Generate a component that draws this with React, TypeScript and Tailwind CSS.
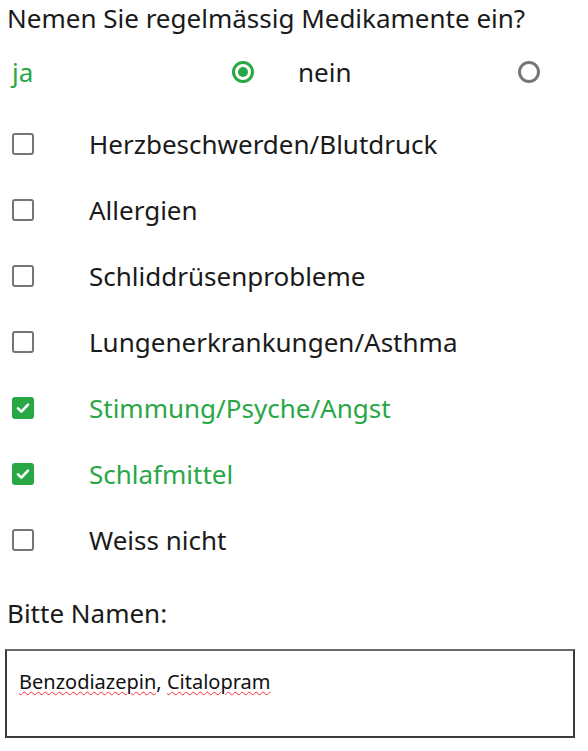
import { useState } from "react"

const options = [
  "Herzbeschwerden/Blutdruck",
  "Allergien",
  "Schliddrüsenprobleme",
  "Lungenerkrankungen/Asthma",
  "Stimmung/Psyche/Angst",
  "Schlafmittel",
  "Weiss nicht",
]

function Radio({ checked }: { checked: boolean }) {
  return (
    <span
      className={`flex items-center justify-center w-[22px] h-[22px] rounded-full border-[3px] ${
        checked ? "border-[#28a745]" : "border-[#767676]"
      }`}
    >
      {checked && <span className="w-[10px] h-[10px] rounded-full bg-[#28a745]" />}
    </span>
  )
}

function Checkbox({ checked }: { checked: boolean }) {
  if (checked) {
    return (
      <span className="flex items-center justify-center w-[22px] h-[22px] rounded-[3px] bg-[#28a745]">
        <svg width="16" height="16" viewBox="0 0 16 16" fill="none">
          <path d="M3 8.4 6.4 11.6 13 4.6" stroke="white" strokeWidth="2.6" strokeLinecap="round" strokeLinejoin="round" />
        </svg>
      </span>
    )
  }
  return <span className="block w-[22px] h-[22px] rounded-[3px] border-[2.5px] border-[#767676]" />
}

export default function App() {
  const [answer, setAnswer] = useState<"ja" | "nein">("ja")
  const [checked, setChecked] = useState<string[]>(["Stimmung/Psyche/Angst", "Schlafmittel"])

  const toggle = (o: string) =>
    setChecked(c => (c.includes(o) ? c.filter(x => x !== o) : [...c, o]))

  return (
    <div className="w-[588px] h-[751px] bg-white text-[#1a1a1a] font-['Noto_Sans',sans-serif] text-[26px] leading-none">
      <div className="pl-[7px] pt-[5px] h-[36px]">Nemen Sie regelmässig Medikamente ein?</div>

      {/* ja / nein */}
      <div className="flex mt-[11px] h-[50px] items-center">
        {(["ja", "nein"] as const).map(a => (
          <button
            key={a}
            onClick={() => setAnswer(a)}
            className={`flex items-center justify-between w-[286px] pl-[12px] pr-[32px] ${
              answer === a ? "text-[#28a745]" : "text-[#1a1a1a]"
            }`}
          >
            <span>{a}</span>
            <Radio checked={answer === a} />
          </button>
        ))}
      </div>

      {/* Checkboxes */}
      <div className="flex flex-col mt-[14px]">
        {options.map(o => {
          const on = checked.includes(o)
          return (
            <button
              key={o}
              onClick={() => toggle(o)}
              className={`flex items-center h-[66px] pl-[12px] ${on ? "text-[#28a745]" : "text-[#1a1a1a]"}`}
            >
              <Checkbox checked={on} />
              <span className="ml-[55px]">{o}</span>
            </button>
          )
        })}
      </div>

      <div className="pl-[7px] mt-[27px]">Bitte Namen:</div>

      <div className="ml-[5px] mt-[23px] w-[570px] h-[89px] border-2 border-[#3c3c3c] border-t-[#6a6a6a] px-[12px] pt-[21px] text-[20px] text-[#111]">
        <span className="underline decoration-wavy decoration-red-500 decoration-1 underline-offset-2">Benzodiazepin</span>
        ,{" "}
        <span className="underline decoration-wavy decoration-red-500 decoration-1 underline-offset-2">Citalopram</span>
      </div>
    </div>
  )
}
